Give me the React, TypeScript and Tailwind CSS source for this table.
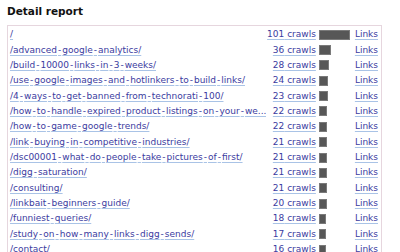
const rows: [string, number][] = [
  ["/", 101],
  ["/advanced-google-analytics/", 36],
  ["/build-10000-links-in-3-weeks/", 28],
  ["/use-google-images-and-hotlinkers-to-build-links/", 24],
  ["/4-ways-to-get-banned-from-technorati-100/", 23],
  ["/how-to-handle-expired-product-listings-on-your-we...", 22],
  ["/how-to-game-google-trends/", 22],
  ["/link-buying-in-competitive-industries/", 21],
  ["/dsc00001-what-do-people-take-pictures-of-first/", 21],
  ["/digg-saturation/", 21],
  ["/consulting/", 21],
  ["/linkbait-beginners-guide/", 20],
  ["/funniest-queries/", 18],
  ["/study-on-how-many-links-digg-sends/", 17],
  ["/contact/", 16],
];

const link =
  "text-[#3b3ba0] underline decoration-[#a9c3e6] underline-offset-[2px]";

// hyphens in the original font are wider, pad them a bit
const Path = ({ text }: { text: string }) => {
  const parts = text.split("-");
  return (
    <>
      {parts.map((p, i) => (
        <span key={i}>
          {i > 0 && <span className="mx-[1px]">-</span>}
          {p}
        </span>
      ))}
    </>
  );
};

const App = () => {
  return (
    <div className="w-[400px] h-[252px] overflow-hidden bg-white font-['DejaVu_Sans',sans-serif]">
      <h2 className="pl-[7px] pt-[3px] h-[25px] text-[10.5px] font-bold text-[#111] leading-[16px]">
        Detail report
      </h2>

      <div className="ml-[7px] w-[375px] border border-b-0 border-[#e6d6de] pt-[1px]">
        {rows.map(([path, n]) => (
          <div
            key={path}
            className="flex items-center h-[15.36px] text-[9px] leading-[15px]"
          >
            <div className="flex-1 min-w-0 pl-[2px] whitespace-nowrap overflow-hidden">
              <a className={link}>
                <Path text={path} />
              </a>
            </div>
            <a className={`${link} shrink-0 w-[50px] text-right whitespace-nowrap`}>
              {n} crawls
            </a>
            <div className="shrink-0 w-[39px] pl-[3px]">
              <div
                className="h-[10px] bg-[#575757] border border-[#7a7a7a]"
                style={{ width: Math.round((n * 29) / 101) + 2 }}
              />
            </div>
            <a className={`${link} shrink-0 pr-[3px]`}>Links</a>
          </div>
        ))}
      </div>
    </div>
  );
};

export default App;
